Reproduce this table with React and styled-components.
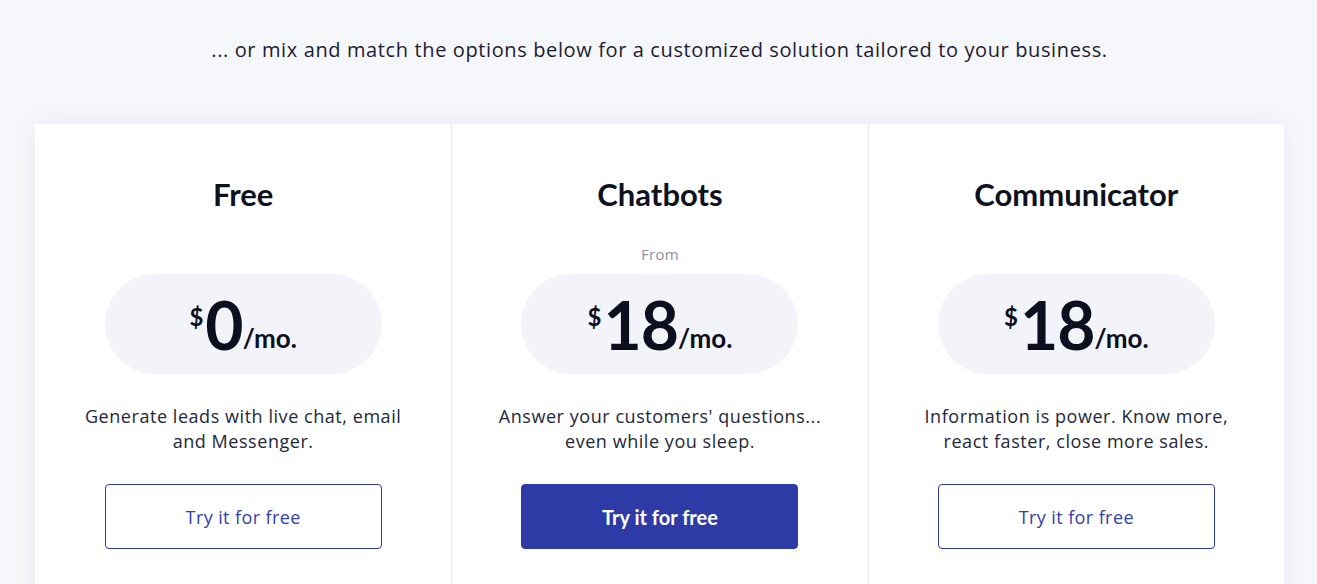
import styled, { createGlobalStyle } from 'styled-components';

const plans = [
  {
    id: 'free',
    name: 'Free',
    from: false,
    price: '0',
    text: ['Generate leads with live chat, email', 'and Messenger.'],
    primary: false,
  },
  {
    id: 'chatbots',
    name: 'Chatbots',
    from: true,
    price: '18',
    text: ["Answer your customers' questions...", 'even while you sleep.'],
    primary: true,
  },
  {
    id: 'communicator',
    name: 'Communicator',
    from: false,
    price: '18',
    text: ['Information is power. Know more,', 'react faster, close more sales.'],
    primary: false,
  },
];

export default function App() {
  return (
    <>
      <GlobalStyle />
      <Page>
        <Intro>
          ... or mix and match the options below for a customized solution tailored to your business.
        </Intro>
        <Card>
          {plans.map((plan) => {
            return (
              <Column key={plan.id}>
                <Title>{plan.name}</Title>
                <From $show={plan.from}>From</From>
                <Pill>
                  <Dollar>$</Dollar>
                  <Amount>{plan.price}</Amount>
                  <Per>/mo.</Per>
                </Pill>
                <Description>
                  {plan.text[0]}
                  <br />
                  {plan.text[1]}
                </Description>
                <Button $primary={plan.primary}>Try it for free</Button>
              </Column>
            );
          })}
        </Card>
      </Page>
    </>
  );
}

const GlobalStyle = createGlobalStyle`
  body {
    margin: 0;
    background: #f6f7fb;
    font-family: 'Open Sans', 'Noto Sans', sans-serif;
    color: #161a2b;
  }
`;

const Page = styled.main`
  display: flex;
  flex-direction: column;
  align-items: center;
  height: 584px;
  padding-left: 2px;
  overflow: hidden;
`;

const Intro = styled.p`
  margin: 36px 0 0;
  font-size: 20px;
  line-height: 28px;
  letter-spacing: 0.62px;
  color: #1c2033;
`;

const Card = styled.section`
  margin-top: 60px;
  width: 1249px;
  display: grid;
  grid-template-columns: repeat(3, 1fr);
  background: #fff;
  box-shadow: 0 0 24px rgba(30, 40, 90, 0.06);
`;

const Column = styled.div`
  display: flex;
  flex-direction: column;
  align-items: center;
  padding-top: 50px;
  height: 460px;
  border-left: 1px solid #e7e8ee;

  &:first-child {
    border-left: none;
  }
`;

const Title = styled.h2`
  margin: 0;
  font-family: 'Lato', sans-serif;
  font-size: 31px;
  line-height: 40px;
  font-weight: 700;
  color: #0e1120;
`;

const From = styled.div`
  margin-top: 30px;
  font-size: 15px;
  line-height: 20px;
  letter-spacing: 0.3px;
  color: #8d919e;
  visibility: ${(p) => (p.$show ? 'visible' : 'hidden')};
`;

const Pill = styled.div`
  margin-top: 10px;
  width: 277px;
  height: 100px;
  border-radius: 50px;
  background: #f3f4f9;
  display: flex;
  justify-content: center;
  align-items: center;
  color: #0c0f1e;
  font-family: 'Lato', sans-serif;
  font-weight: 700;
  padding-top: 2px;
  box-sizing: border-box;
`;

const Dollar = styled.span`
  font-size: 24px;
  align-self: flex-start;
  margin-top: 26px;
  margin-right: 2px;
`;

const Amount = styled.span`
  font-size: 66px;
  line-height: 64px;
  letter-spacing: -1px;
`;

const Per = styled.span`
  font-size: 26px;
  align-self: flex-end;
  margin-bottom: 20px;
`;

const Description = styled.p`
  margin: 30px 0 0;
  font-size: 18px;
  line-height: 25px;
  letter-spacing: 0.55px;
  text-align: center;
  color: #23273a;
`;

const Button = styled.button`
  margin-top: 30px;
  width: 277px;
  height: 65px;
  border-radius: 4px;
  border: 1px solid #2e3aa6;
  background: ${(p) => (p.$primary ? '#2e3aa6' : '#fff')};
  color: ${(p) => (p.$primary ? '#fff' : '#3441a9')};
  font-family: ${(p) => (p.$primary ? "'Lato', sans-serif" : "'Open Sans', sans-serif")};
  font-size: ${(p) => (p.$primary ? '20px' : '18px')};
  font-weight: ${(p) => (p.$primary ? 700 : 400)};
  letter-spacing: ${(p) => (p.$primary ? '0' : '0.4px')};
  cursor: pointer;
`;
